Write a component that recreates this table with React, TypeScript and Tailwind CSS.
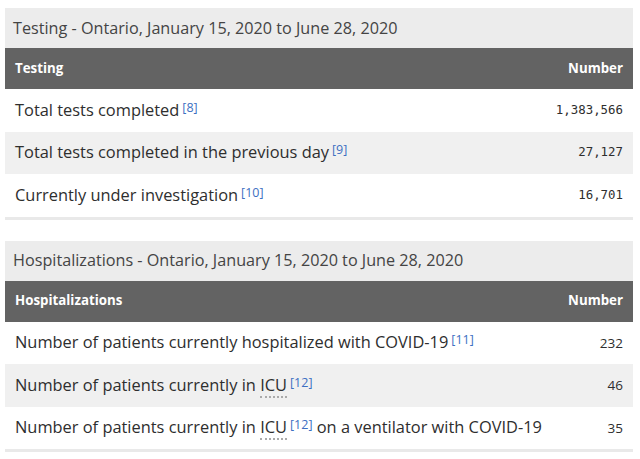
import React from "react";

type Row = { label: React.ReactNode; value: string; mono?: boolean };

const font = { fontFamily: '"Open Sans", "Noto Sans", sans-serif' };

function Ref({ n }: { n: number }) {
  return <sup className="ml-[3px] text-[12.5px] text-[#3d6fc2] relative -top-[4px]">[{n}]</sup>;
}

function Icu() {
  return <abbr className="border-b-2 border-dotted border-[#aaa]" style={{ textDecoration: "none" }}>ICU</abbr>;
}

function DataTable({ caption, head, rows }: { caption: string; head: string; rows: Row[] }) {
  return (
    <div className="mx-[5px] w-[628px] border-b-[3px] border-[#e9e9e9]">
      <div className="h-[40px] flex items-center pl-[8px] bg-[#ececec] text-[16.2px] text-[#444]">{caption}</div>
      <div className="h-[41px] flex items-center justify-between px-[10px] bg-[#636363] text-white text-[13.3px] font-bold">
        <span>{head}</span>
        <span>Number</span>
      </div>
      {rows.map((r, i) => (
        <div
          key={i}
          className={`h-[42.5px] flex items-center justify-between px-[10px] text-[16.4px] text-[#2e2e2e] ${i % 2 === 1 ? "bg-[#f0f0f0]" : "bg-white"}`}
        >
          <span>{r.label}</span>
          <span
            className={r.mono ? "text-[12.4px]" : "text-[13.5px]"}
            style={r.mono ? { fontFamily: '"DejaVu Sans Mono", "Liberation Mono", monospace' } : undefined}
          >
            {r.value}
          </span>
        </div>
      ))}
    </div>
  );
}

export default function App() {
  return (
    <div className="w-[640px] h-[459px] bg-white pt-[8px] overflow-hidden" style={font}>
      <DataTable
        caption="Testing - Ontario, January 15, 2020 to June 28, 2020"
        head="Testing"
        rows={[
          { label: <>Total tests completed<Ref n={8} /></>, value: "1,383,566", mono: true },
          { label: <>Total tests completed in the previous day<Ref n={9} /></>, value: "27,127", mono: true },
          { label: <>Currently under investigation<Ref n={10} /></>, value: "16,701", mono: true },
        ]}
      />
      <div className="h-[21px]" />
      <DataTable
        caption="Hospitalizations - Ontario, January 15, 2020 to June 28, 2020"
        head="Hospitalizations"
        rows={[
          { label: <>Number of patients currently hospitalized with COVID-19<Ref n={11} /></>, value: "232" },
          { label: <>Number of patients currently in <Icu /><Ref n={12} /></>, value: "46" },
          { label: <>Number of patients currently in <Icu /><Ref n={12} /> on a ventilator with COVID-19</>, value: "35" },
        ]}
      />
    </div>
  );
}
